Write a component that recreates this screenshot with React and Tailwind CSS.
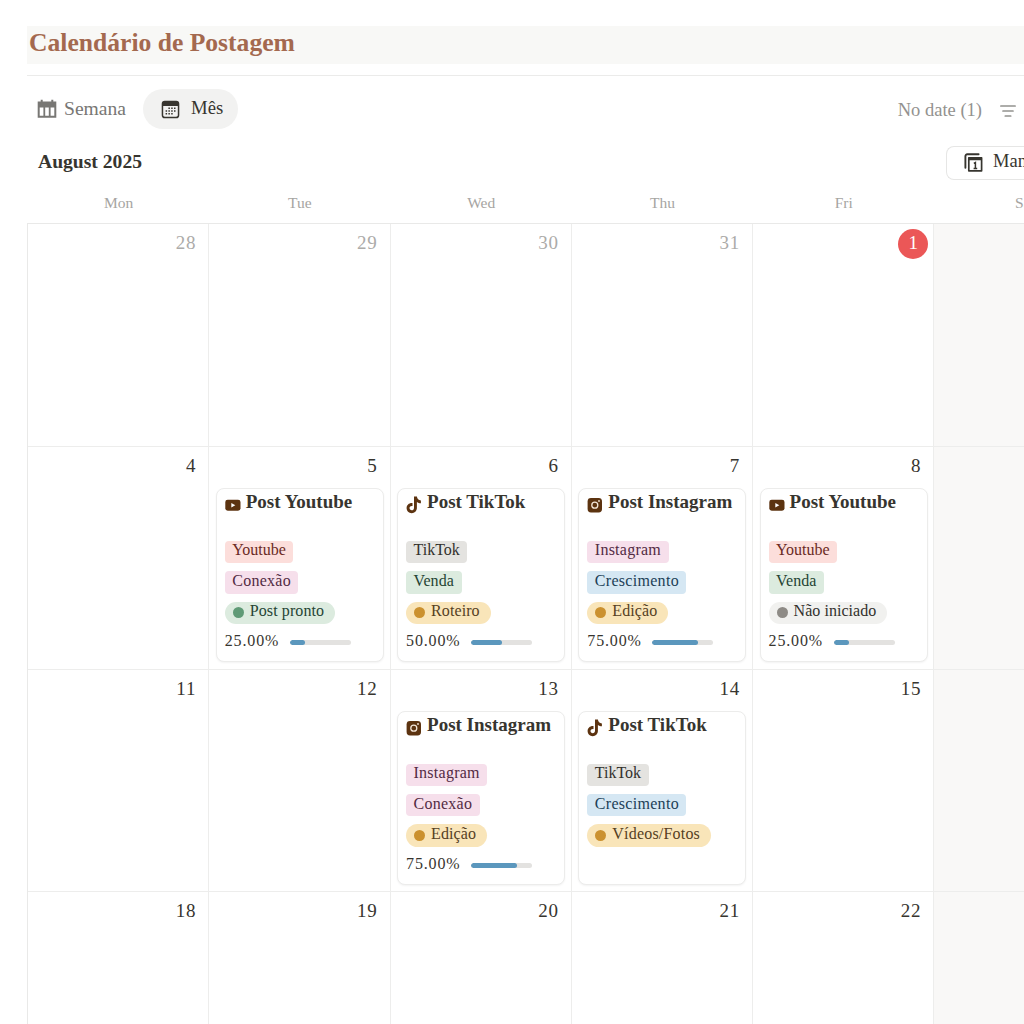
import React from 'react';
import clsx from 'clsx';

const weekDays = ['Mon', 'Tue', 'Wed', 'Thu', 'Fri', 'Sat'];

const tags = {
    Youtube: 'bg-[#fcdedb] text-[#6a2a24]',
    TikTok: 'bg-[#e4e3e0] text-[#32302c]',
    Instagram: 'bg-[#f6dfeb] text-[#532b43] tracking-[0.25px]',
    Conexão: 'bg-[#f6dfeb] text-[#532b43] tracking-[0.25px]',
    Venda: 'bg-[#dcebdf] text-[#254434] tracking-[0.1px]',
    Crescimento: 'bg-[#d5e7f3] text-[#213f57] tracking-[0.3px]',
};

const statuses = {
    'Post pronto': { pill: 'bg-[#dcebdf] text-[#254434] tracking-[0.1px]', dot: 'bg-[#5f9a76]' },
    Roteiro: { pill: 'bg-[#f9e5b9] text-[#55401f] tracking-[0.1px]', dot: 'bg-[#cb912f]' },
    Edição: { pill: 'bg-[#f9e5b9] text-[#55401f] tracking-[0.1px]', dot: 'bg-[#cb912f]' },
    'Vídeos/Fotos': { pill: 'bg-[#f9e5b9] text-[#55401f] tracking-[0.2px]', dot: 'bg-[#cb912f]' },
    'Não iniciado': { pill: 'bg-[#f1f1ef] text-[#32302c] tracking-[0.05px]', dot: 'bg-[#8e8b86]' },
};

const posts = {
    5: { network: 'Youtube', tags: ['Youtube', 'Conexão'], status: 'Post pronto', progress: 25 },
    6: { network: 'TikTok', tags: ['TikTok', 'Venda'], status: 'Roteiro', progress: 50 },
    7: { network: 'Instagram', tags: ['Instagram', 'Crescimento'], status: 'Edição', progress: 75 },
    8: { network: 'Youtube', tags: ['Youtube', 'Venda'], status: 'Não iniciado', progress: 25 },
    13: { network: 'Instagram', tags: ['Instagram', 'Conexão'], status: 'Edição', progress: 75 },
    14: { network: 'TikTok', tags: ['TikTok', 'Crescimento'], status: 'Vídeos/Fotos' },
};

// Monday to Friday, the first row starts in July
const weeks = [
    [28, 29, 30, 31, 1],
    [4, 5, 6, 7, 8],
    [11, 12, 13, 14, 15],
    [18, 19, 20, 21, 22],
];

const WeekIcon = () => (
    <svg width="20" height="20" viewBox="0 0 20 20" fill="currentColor">
        <path fillRule="evenodd" d="M.7 2.600h3V.8h2v1.800h8.600V.8h2v1.800h3v16.200H.7zM2.700 8.400v8.400h3.700V8.400zm5.500 0v8.400h3.600V8.400zm5.400 0v8.400h3.700V8.400z" />
    </svg>
);

const MonthIcon = () => (
    <svg width="19" height="19" viewBox="0 0 19 19" fill="currentColor">
        <path fillRule="evenodd" d="M3.800.7h11.400A3.100 3.100 0 0 1 18.300 3.800v11.400a3.100 3.100 0 0 1-3.100 3.100H3.800a3.100 3.100 0 0 1-3.100-3.100V3.800A3.100 3.100 0 0 1 3.800.7zM2.200 5.900v9.200c0 1 .7 1.700 1.700 1.700h11.200c1 0 1.700-.7 1.700-1.700V5.900z" />
        <path d="M7.400 7.400h1.500v1.500H7.400zM10.200 7.400h1.500v1.500h-1.500zM13 7.400h1.500v1.500H13zM4.600 10.200h1.500v1.500H4.600zM7.400 10.200h1.500v1.500H7.400zM10.200 10.200h1.500v1.500h-1.500zM13 10.200h1.500v1.500H13zM4.600 13h1.500v1.500H4.600zM7.400 13h1.500v1.500H7.400zM10.200 13h1.500v1.500h-1.500z" />
    </svg>
);

const FilterIcon = () => (
    <svg width="16" height="12" viewBox="0 0 16 12" stroke="currentColor" strokeWidth="1.7" strokeLinecap="round">
        <path d="M.9 1h14.200M3 6h10M5.300 11h5.400" />
    </svg>
);

const ManageIcon = () => (
    <svg width="19" height="19" viewBox="0 0 19 19" fill="none" stroke="currentColor">
        <path d="M1.400 14.800V3.200c0-1.200.7-1.900 1.900-1.900h11.300" strokeWidth="1.900" strokeLinecap="round" />
        <path d="M4.800 4.800h12.800v13H4.800z" strokeWidth="1.700" strokeLinejoin="round" />
        <path d="M4.700 5.800h13" strokeWidth="3" />
        <path d="M9.800 10.300l1.600-.8v6M9.600 15.500h3.600" strokeWidth="1.500" />
    </svg>
);

const NetworkIcon = ({ name }) => {
    if (name === 'Youtube') {
        return (
            <svg width="16" height="16" viewBox="0 0 16 16">
                <rect x=".3" y="2.700" width="15.200" height="11" rx="2.400" fill="#5c3310" />
                <path d="M6.300 5.900v4.600l4-2.300z" fill="#fff" />
            </svg>
        );
    }
    if (name === 'TikTok') {
        return (
            <svg width="16" height="18" viewBox="0 0 16 18" fill="#5c3310">
                <path d="M8 .5h2.900c.2 2.300 1.700 3.700 4 3.900v2.900c-1.500 0-2.900-.5-4-1.300v5.800c0 3.200-2.300 5.400-5.200 5.400S.6 15 .6 12.100c0-3.100 2.500-5.400 5.900-5.100v3c-1.700-.3-3 .6-3 2.100 0 1.300 1 2.200 2.200 2.200 1.400 0 2.300-.9 2.300-2.500z" />
            </svg>
        );
    }
    return (
        <svg width="16" height="16" viewBox="0 0 16 16">
            <rect x=".6" y="1" width="14.400" height="14.400" rx="3.400" fill="#5c3310" />
            <circle cx="7.800" cy="8.200" r="3" fill="none" stroke="#f3e6d8" strokeWidth="1.300" />
            <circle cx="12" cy="4" r=".9" fill="#f3e6d8" />
        </svg>
    );
};

const PostCard = ({ post }) => (
    <div className="ml-[6.500px] mt-[41px] h-[174px] w-[168px] rounded-lg border border-[#ececeb] bg-white pl-2 shadow-[0_1px_2px_rgba(0,0,0,0.05)]">
        <div className="flex h-[27px] items-center gap-[5px]">
            <span className="mt-[5px] flex w-4 shrink-0 justify-center">
                <NetworkIcon name={post.network} />
            </span>
            <span className="whitespace-nowrap text-[19px] font-bold text-[#37352f]">Post {post.network}</span>
        </div>

        <div className="mt-[25px] flex flex-col items-start gap-2">
            {post.tags.map((tag) => (
                <span key={tag} className={clsx('flex h-[22.400px] items-center rounded-[4px] px-[7.500px] pb-[3px] text-base leading-none', tags[tag])}>
                    {tag}
                </span>
            ))}
            <span className={clsx('flex h-[22.400px] items-center gap-[6px] rounded-full pl-2 pr-[11px] text-base leading-none', statuses[post.status].pill)}>
                <span className={clsx('size-[11px] rounded-full', statuses[post.status].dot)} />
                <span className="whitespace-nowrap pb-[3px]">{post.status}</span>
            </span>
        </div>

        {post.progress && (
            <div className="mt-[7px] flex items-center text-[#37352f]">
                <span className="w-[65px] text-base leading-5 tracking-[0.850px]">{post.progress.toFixed(2)}%</span>
                <div className="mt-[3px] h-[5px] w-[61px] overflow-hidden rounded-full bg-[#e3e2e0]">
                    <div className="h-full rounded-full bg-[#5b97bd]" style={{ width: `${post.progress}%` }} />
                </div>
            </div>
        )}
    </div>
);

const DayCell = ({ day, week }) => {
    const isToday = week === 0 && day === 1;
    const isOutside = week === 0 && day > 20;

    return (
        <div className="relative border-b border-r border-[#ededec]">
            {isToday ? (
                <span className="absolute right-[5px] top-[5px] flex size-[30px] items-center justify-center rounded-full bg-[#eb5757] pb-[2px] text-[19px] text-white">
                    {day}
                </span>
            ) : (
                <span className={clsx('absolute right-3 top-[7px] text-[19px] leading-6 tracking-[0.800px]', isOutside ? 'text-[#acaba9]' : 'text-[#37352f]')}>
                    {day}
                </span>
            )}
            {week > 0 && posts[day] && <PostCard post={posts[day]} />}
        </div>
    );
};

const App = () => {
    return (
        <div className="h-screen w-full overflow-hidden bg-white pl-[27px] pt-[26px] font-['Liberation_Serif',serif] text-[#37352f]">
            <h1 className="h-[38px] bg-[#f8f8f6] pl-[2px] text-[25.600px] font-bold leading-[34px] text-[#a4694f]">
                Calendário de Postagem
            </h1>
            <div className="mt-[11px] border-t border-[#ebebea]" />

            <div className="mt-[13px] flex h-10 items-center justify-between">
                <div className="flex items-center">
                    <div className="flex items-center gap-[7px] pl-[10px] text-[19.600px] text-[#787774]">
                        <WeekIcon />
                        <span className="pb-px">Semana</span>
                    </div>
                    <div className="ml-[17px] flex h-10 w-[95px] items-center gap-[11px] rounded-full bg-[#f2f2f1] pl-[18px] text-[18.700px]">
                        <MonthIcon />
                        <span className="pb-px">Mês</span>
                    </div>
                </div>
                <div className="flex items-center gap-[18px] pr-2 pt-[3px] text-[18.500px] text-[#93928f]">
                    <span>No date (1)</span>
                    <FilterIcon />
                </div>
            </div>

            <div className="mt-[17px] flex h-[34px] items-center justify-between">
                <h2 className="pb-[2px] pl-[11px] text-[19.600px] font-bold">August 2025</h2>
                <div className="flex h-[34px] w-[78px] items-center gap-[10px] overflow-hidden whitespace-nowrap rounded-l-lg border border-r-0 border-[#e6e6e5] pl-[17px]">
                    <span className="shrink-0 pb-px">
                        <ManageIcon />
                    </span>
                    <span className="pb-[2px] text-[18.500px]">Manage in Calendar</span>
                </div>
            </div>

            <div className="w-[1088.600px]">
                <div className="grid h-[43px] grid-cols-6 pl-px text-center text-[15.500px] leading-[46px] text-[#a6a5a2]">
                    {weekDays.map((name) => (
                        <span key={name}>{name}</span>
                    ))}
                </div>
                <div className="border-l border-t border-[#e9e9e8]">
                    {weeks.map((days, week) => (
                        <div key={week} className="grid h-[222.800px] grid-cols-6">
                            {days.map((day) => (
                                <DayCell key={day} day={day} week={week} />
                            ))}
                            <div className="border-b border-[#ededec] bg-[#f9f8f7]" />
                        </div>
                    ))}
                </div>
            </div>
        </div>
    );
};

export default App;
